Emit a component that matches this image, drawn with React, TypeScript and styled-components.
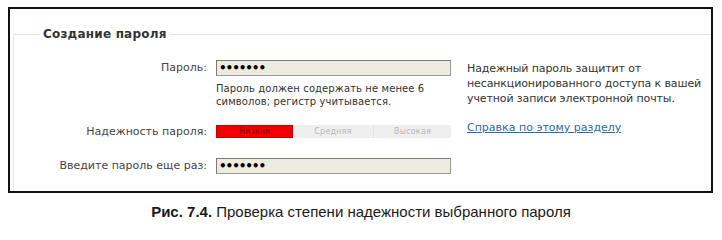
import React from "react";
import styled, { createGlobalStyle } from "styled-components";

const Global = createGlobalStyle`
  html, body { margin: 0; padding: 0; background: #fff; }
  body { font-family: "DejaVu Sans", Verdana, sans-serif; }
  * { box-sizing: border-box; }
`;

const Page = styled.div`
  width: 722px;
  height: 225px;
  padding: 7px 0 0 8px;
  background: #fff;
`;

const Frame = styled.div`
  width: 705px;
  height: 186px;
  border: 2px solid #111;
  padding: 0 0 0 3px;
  overflow: hidden;
`;

const Fieldset = styled.fieldset`
  margin: 17px 0 0 0;
  padding: 0;
  border: none;
  border-top: 1px solid #e2e2e2;
  border-left: 1px solid #e8e8e8;
  min-width: 0;
  height: 200px;
`;

const Legend = styled.legend`
  margin-left: 26px;
  padding: 0 3px;
  font-family: "DejaVu Sans", Verdana, sans-serif;
  font-weight: bold;
  font-size: 12px;
  letter-spacing: 0.2px;
  line-height: 16px;
  color: #333;
`;

const Row = styled.div<{ $top: number }>`
  display: grid;
  grid-template-columns: 193px 235px 1fr;
  column-gap: 9px;
  align-items: start;
  margin-top: ${(p) => p.$top}px;
`;

const Label = styled.div<{ $pt?: number }>`
  text-align: right;
  font-size: 11px;
  line-height: 16px;
  color: #444;
  padding-top: ${(p) => p.$pt ?? 0}px;
  white-space: nowrap;
`;

const FieldCol = styled.div`
  display: flex;
  flex-direction: column;
`;

const PasswordBox = styled.div`
  width: 235px;
  height: 16px;
  background: #eeebdf;
  border: 1px solid #9a9a9a;
  border-top-color: #7a7a7a;
  border-left-color: #7a7a7a;
  padding-left: 2px;
  font-size: 12px;
  line-height: 14px;
  letter-spacing: -1.1px;
  color: #000;
  font-weight: bold;
`;

const Hint = styled.div`
  margin-top: 6px;
  font-size: 10px;
  line-height: 13px;
  color: #333;
  letter-spacing: 0.1px;
`;

const Help = styled.div`
  padding-left: 7px;
  font-size: 11px;
  line-height: 15px;
  color: #333;
  margin-top: 1px;
  letter-spacing: -0.12px;
`;

const HelpLink = styled.a`
  display: block;
  padding-left: 7px;
  font-size: 11px;
  line-height: 14px;
  color: #2a6aa8;
  text-decoration: underline;
  margin-top: -3px;
`;

const Meter = styled.div`
  display: flex;
  width: 235px;
  height: 13px;
  background: #efefef;
  margin-top: 1px;
`;

const Segment = styled.div<{ $active?: boolean; $w: number; $sep?: boolean }>`
  width: ${(p) => p.$w}px;
  height: 13px;
  display: flex;
  align-items: center;
  justify-content: center;
  font-size: 8px;
  letter-spacing: 0.2px;
  background: ${(p) => (p.$active ? "#f20000" : "transparent")};
  border: ${(p) => (p.$active ? "1px solid #c40000" : "none")};
  border-left: ${(p) => (p.$sep ? "1px solid #e2e2e2" : p.$active ? "1px solid #c40000" : "none")};
  color: ${(p) => (p.$active ? "#8a0000" : "#b8b8b8")};
`;

const Caption = styled.div`
  margin-top: 10px;
  margin-left: -8px;
  width: 722px;
  text-align: center;
  font-family: "Liberation Sans", Arial, sans-serif;
  font-size: 15px;
  line-height: 18px;
  color: #1a1a1a;
  b { font-weight: bold; }
`;

export default function App() {
  return (
    <Page>
      <Global />
      <Frame>
        <Fieldset>
          <Legend>Создание пароля</Legend>
          <Row $top={18}>
            <Label>Пароль:</Label>
            <FieldCol>
              <PasswordBox>•••••••</PasswordBox>
              <Hint>
                Пароль должен содержать не менее 6
                <br />
                символов; регистр учитывается.
              </Hint>
            </FieldCol>
            <Help>
              Надежный пароль защитит от
              <br />
              несанкционированного доступа к вашей
              <br />
              учетной записи электронной почты.
            </Help>
          </Row>
          <Row $top={16}>
            <Label $pt={-1}>Надежность пароля:</Label>
            <Meter>
              <Segment $active $w={77}>Низкая</Segment>
              <Segment $w={80}>Средняя</Segment>
              <Segment $w={78} $sep>Высокая</Segment>
            </Meter>
            <HelpLink href="#">Справка по этому разделу</HelpLink>
          </Row>
          <Row $top={18}>
            <Label>Введите пароль еще раз:</Label>
            <PasswordBox>•••••••</PasswordBox>
            <div />
          </Row>
        </Fieldset>
      </Frame>
      <Caption>
        <b>Рис. 7.4.</b> Проверка степени надежности выбранного пароля
      </Caption>
    </Page>
  );
}
